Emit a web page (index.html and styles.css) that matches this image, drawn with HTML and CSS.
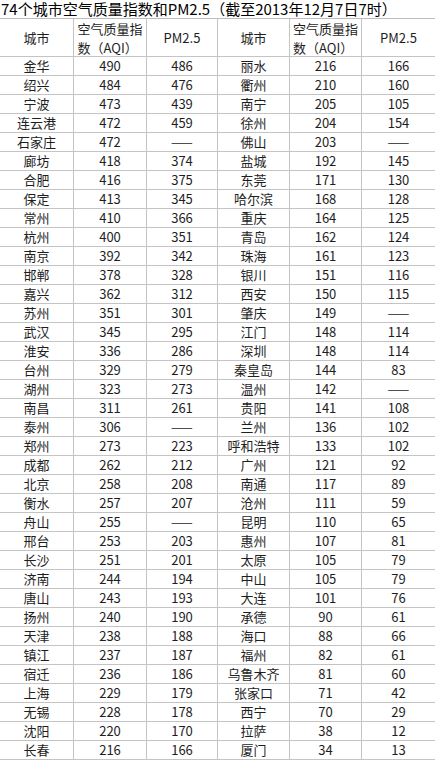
FILE: index.html
```html
<!DOCTYPE html>
<html lang="zh-CN">
<head>
<meta charset="utf-8">
<title>74个城市空气质量指数和PM2.5</title>
<link rel="stylesheet" href="styles.css">
</head>
<body>
<div class="sheet">
  <div class="title">74个城市空气质量指数和PM2.5（截至2013年12月7日7时）</div>
  <div class="grid" role="table">
    <div class="c h">城市</div><div class="c h"><span class="wrap">空气质量指<br>数（AQI）</span></div><div class="c h">PM2.5</div><div class="c h">城市</div><div class="c h"><span class="wrap">空气质量指<br>数（AQI）</span></div><div class="c h">PM2.5</div>
    <div class="c">金华</div><div class="c">490</div><div class="c">486</div><div class="c">丽水</div><div class="c">216</div><div class="c">166</div>
    <div class="c">绍兴</div><div class="c">484</div><div class="c">476</div><div class="c">衢州</div><div class="c">210</div><div class="c">160</div>
    <div class="c">宁波</div><div class="c">473</div><div class="c">439</div><div class="c">南宁</div><div class="c">205</div><div class="c">105</div>
    <div class="c">连云港</div><div class="c">472</div><div class="c">459</div><div class="c">徐州</div><div class="c">204</div><div class="c">154</div>
    <div class="c">石家庄</div><div class="c">472</div><div class="c">——</div><div class="c">佛山</div><div class="c">203</div><div class="c">——</div>
    <div class="c">廊坊</div><div class="c">418</div><div class="c">374</div><div class="c">盐城</div><div class="c">192</div><div class="c">145</div>
    <div class="c">合肥</div><div class="c">416</div><div class="c">375</div><div class="c">东莞</div><div class="c">171</div><div class="c">130</div>
    <div class="c">保定</div><div class="c">413</div><div class="c">345</div><div class="c">哈尔滨</div><div class="c">168</div><div class="c">128</div>
    <div class="c">常州</div><div class="c">410</div><div class="c">366</div><div class="c">重庆</div><div class="c">164</div><div class="c">125</div>
    <div class="c">杭州</div><div class="c">400</div><div class="c">351</div><div class="c">青岛</div><div class="c">162</div><div class="c">124</div>
    <div class="c">南京</div><div class="c">392</div><div class="c">342</div><div class="c">珠海</div><div class="c">161</div><div class="c">123</div>
    <div class="c">邯郸</div><div class="c">378</div><div class="c">328</div><div class="c">银川</div><div class="c">151</div><div class="c">116</div>
    <div class="c">嘉兴</div><div class="c">362</div><div class="c">312</div><div class="c">西安</div><div class="c">150</div><div class="c">115</div>
    <div class="c">苏州</div><div class="c">351</div><div class="c">301</div><div class="c">肇庆</div><div class="c">149</div><div class="c">——</div>
    <div class="c">武汉</div><div class="c">345</div><div class="c">295</div><div class="c">江门</div><div class="c">148</div><div class="c">114</div>
    <div class="c">淮安</div><div class="c">336</div><div class="c">286</div><div class="c">深圳</div><div class="c">148</div><div class="c">114</div>
    <div class="c">台州</div><div class="c">329</div><div class="c">279</div><div class="c">秦皇岛</div><div class="c">144</div><div class="c">83</div>
    <div class="c">湖州</div><div class="c">323</div><div class="c">273</div><div class="c">温州</div><div class="c">142</div><div class="c">——</div>
    <div class="c">南昌</div><div class="c">311</div><div class="c">261</div><div class="c">贵阳</div><div class="c">141</div><div class="c">108</div>
    <div class="c">泰州</div><div class="c">306</div><div class="c">——</div><div class="c">兰州</div><div class="c">136</div><div class="c">102</div>
    <div class="c">郑州</div><div class="c">273</div><div class="c">223</div><div class="c">呼和浩特</div><div class="c">133</div><div class="c">102</div>
    <div class="c">成都</div><div class="c">262</div><div class="c">212</div><div class="c">广州</div><div class="c">121</div><div class="c">92</div>
    <div class="c">北京</div><div class="c">258</div><div class="c">208</div><div class="c">南通</div><div class="c">117</div><div class="c">89</div>
    <div class="c">衡水</div><div class="c">257</div><div class="c">207</div><div class="c">沧州</div><div class="c">111</div><div class="c">59</div>
    <div class="c">舟山</div><div class="c">255</div><div class="c">——</div><div class="c">昆明</div><div class="c">110</div><div class="c">65</div>
    <div class="c">邢台</div><div class="c">253</div><div class="c">203</div><div class="c">惠州</div><div class="c">107</div><div class="c">81</div>
    <div class="c">长沙</div><div class="c">251</div><div class="c">201</div><div class="c">太原</div><div class="c">105</div><div class="c">79</div>
    <div class="c">济南</div><div class="c">244</div><div class="c">194</div><div class="c">中山</div><div class="c">105</div><div class="c">79</div>
    <div class="c">唐山</div><div class="c">243</div><div class="c">193</div><div class="c">大连</div><div class="c">101</div><div class="c">76</div>
    <div class="c">扬州</div><div class="c">240</div><div class="c">190</div><div class="c">承德</div><div class="c">90</div><div class="c">61</div>
    <div class="c">天津</div><div class="c">238</div><div class="c">188</div><div class="c">海口</div><div class="c">88</div><div class="c">66</div>
    <div class="c">镇江</div><div class="c">237</div><div class="c">187</div><div class="c">福州</div><div class="c">82</div><div class="c">61</div>
    <div class="c">宿迁</div><div class="c">236</div><div class="c">186</div><div class="c">乌鲁木齐</div><div class="c">81</div><div class="c">60</div>
    <div class="c">上海</div><div class="c">229</div><div class="c">179</div><div class="c">张家口</div><div class="c">71</div><div class="c">42</div>
    <div class="c">无锡</div><div class="c">228</div><div class="c">178</div><div class="c">西宁</div><div class="c">70</div><div class="c">29</div>
    <div class="c">沈阳</div><div class="c">220</div><div class="c">170</div><div class="c">拉萨</div><div class="c">38</div><div class="c">12</div>
    <div class="c">长春</div><div class="c">216</div><div class="c">166</div><div class="c">厦门</div><div class="c">34</div><div class="c">13</div>
  </div>
</div>
</body>
</html>
```

FILE: styles.css
```css
html, body {
  margin: 0;
  padding: 0;
  background: #ffffff;
}

.sheet {
  width: 435px;
  height: 760px;
  overflow: hidden;
  color: #1e1e1e;
  font-family: "Noto Sans CJK SC", "Noto Sans", sans-serif;
}

.title {
  box-sizing: border-box;
  height: 19px;
  padding-left: 1px;
  border-bottom: 1px solid #bdbdbd;
  font-size: 15px;
  line-height: 18px;
  color: #000000;
  white-space: nowrap;
}

.grid {
  display: grid;
  grid-template-columns: 74px 73px 71px 72px 72px 73px;
  grid-template-rows: 38px;
  grid-auto-rows: 19px;
}

.c {
  box-sizing: border-box;
  display: flex;
  align-items: center;
  justify-content: center;
  border-bottom: 1px solid #c4c4c4;
  border-right: 1px solid #c4c4c4;
  font-size: 13px;
  line-height: 18px;
  white-space: nowrap;
}

.c:nth-child(6n) {
  border-right: none;
}

.h {
  line-height: 19px;
}

.wrap {
  text-align: left;
}
```
